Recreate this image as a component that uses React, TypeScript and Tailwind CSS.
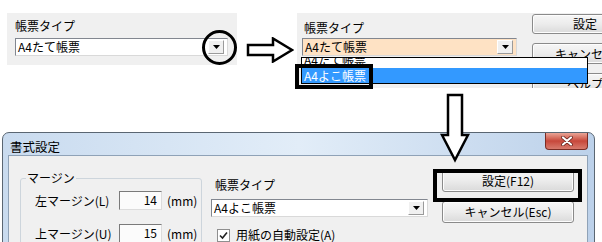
import React from 'react';

function Arrow() {
  return (
    <svg width="7" height="4" viewBox="0 0 7 4">
      <path d="M0 0H7L3.5 4Z" fill="#000" />
    </svg>
  );
}

function Combo({ value, bg = 'bg-white', width }: { value: string; bg?: string; width: string }) {
  return (
    <div className={`flex items-center h-[18px] border border-[#828790] border-r-[#d9d9d9] border-b-[#d9d9d9] ${bg} ${width}`}>
      <span className="flex-1 pl-[2px] text-[12px] leading-[14px] text-black whitespace-nowrap">{value}</span>
      <div className="mr-[3px] w-[16px] h-[14px] flex items-center justify-center bg-[#f0f0f0] border border-white border-r-[#9a9a9a] border-b-[#9a9a9a]">
        <Arrow />
      </div>
    </div>
  );
}

function Button({ label, className = '' }: { label: string; className?: string }) {
  return (
    <div
      className={`flex items-center justify-center rounded-[3px] border border-[#8a8a8a] bg-gradient-to-b from-[#f6f6f6] via-[#ececec] to-[#dadada] shadow-[inset_0_0_0_1px_#fdfdfd] text-[12px] leading-[14px] text-black whitespace-nowrap ${className}`}
    >
      {label}
    </div>
  );
}

function TextBox({ value }: { value: string }) {
  return (
    <div className="w-[43px] h-[19px] border border-[#7a7a7a] border-r-[#dcdcdc] border-b-[#dcdcdc] bg-[#fbfbfb] text-right pr-[4px] text-[12px] leading-[16px]">
      {value}
    </div>
  );
}

export default function App() {
  return (
    <div className="relative w-[602px] h-[242px] overflow-hidden bg-white text-black font-['Noto_Sans_CJK_JP','Liberation_Sans',sans-serif]">
      {/* top row: before / after */}
      <div className="flex items-start pt-[13px]">
        <div className="ml-[7px] w-[230px] h-[52px] bg-[#f0f0f0] pl-[8px] pt-[6px]">
          <div className="text-[12px] leading-[14px]">帳票タイプ</div>
          <div className="mt-[5px]">
            <Combo value="A4たて帳票" width="w-[213px]" />
          </div>
        </div>

        <svg className="ml-[9px] mt-[24px]" width="48" height="26" viewBox="0 0 48 26">
          <polygon points="2,8 27,8 27,1.5 46,13 27,24.5 27,18 2,18" fill="#fff" stroke="#000" strokeWidth="2.5" strokeLinejoin="miter" />
        </svg>

        <div className="relative ml-[3px] flex-1 h-[75px] bg-[#f0f0f0] overflow-hidden flex items-start pl-[5px]">
          <div className="w-[215px] pt-[8px]">
            <div className="ml-[2px] text-[12px] leading-[14px]">帳票タイプ</div>
            <div className="mt-[3px]">
              <Combo value="A4たて帳票" bg="bg-[#fee2c4]" width="w-[215px]" />
            </div>
          </div>
          <div className="ml-[15px] mt-[1px] flex flex-col gap-[9px] shrink-0">
            <Button label="設定" className="w-[106px] h-[20px]" />
            <Button label="キャンセル" className="w-[106px] h-[21px]" />
            <Button label="ヘルプ" className="w-[106px] h-[21px]" />
          </div>

          {/* open dropdown list */}
          <div className="absolute left-[4px] top-[44px] w-[287px] h-[27px] border border-black bg-white overflow-hidden text-[12px]">
            <div className="-mt-[6px]">
              <div className="h-[16px] leading-[15px] pl-[2px]">A4たて帳票</div>
              <div className="h-[16px] leading-[16px] pl-[2px] bg-[#3399ff] text-white">A4よこ帳票</div>
            </div>
          </div>
        </div>
      </div>

      {/* dialog */}
      <div className="ml-[2px] mt-[44px] w-[593px] h-[120px] rounded-t-[7px] border border-[#5a6672] bg-gradient-to-r from-[#c9dbef] via-[#e2edf8] to-[#bcd1ea] flex flex-col">
        <div className="h-[27px] flex items-start justify-between">
          <span className="ml-[7px] mt-[6px] text-[12.5px] leading-[16px]">書式設定</span>
          <div className="mr-[6px] w-[43px] h-[17px] rounded-b-[4px] border border-t-0 border-[#7a2c24] bg-gradient-to-b from-[#e9a496] via-[#c7473b] to-[#d77a6d] flex items-center justify-center">
            <svg width="12" height="10" viewBox="0 0 12 10">
              <path d="M2 1.5L10 8.5M10 1.5L2 8.5" stroke="#5a1a14" strokeWidth="3.6" strokeLinecap="round" />
              <path d="M2 1.5L10 8.5M10 1.5L2 8.5" stroke="#fff" strokeWidth="2.2" strokeLinecap="round" />
            </svg>
          </div>
        </div>

        <div className="ml-[5px] mr-[6px] flex-1 border border-[#8fa2b7] bg-[#f0f0f0] flex items-start">
          <fieldset className="ml-[11px] mt-[15px] w-[182px] h-[84px] border border-[#cdd5dc] rounded-[3px]">
            <legend className="ml-[5px] px-[1px] text-[12px] leading-[14px]">マージン</legend>
            <div className="mt-[6px] flex items-center pl-[14px]">
              <span className="w-[84px] text-[12px] leading-[14px]">左マージン(L)</span>
              <TextBox value="14" />
              <span className="ml-[5px] text-[12px] leading-[14px]">(mm)</span>
            </div>
            <div className="mt-[14px] flex items-center pl-[14px]">
              <span className="w-[84px] text-[12px] leading-[14px]">上マージン(U)</span>
              <TextBox value="15" />
              <span className="ml-[5px] text-[12px] leading-[14px]">(mm)</span>
            </div>
          </fieldset>

          <div className="ml-[9px] mt-[22px]">
            <div className="ml-[4px] text-[12px] leading-[14px]">帳票タイプ</div>
            <div className="mt-[7px]">
              <Combo value="A4よこ帳票" width="w-[217px]" />
            </div>
            <div className="mt-[11px] ml-[6px] flex items-center">
              <div className="w-[13px] h-[13px] border border-[#8f8f8f] bg-white flex items-center justify-center">
                <svg width="9" height="9" viewBox="0 0 9 9">
                  <path d="M1 4.5L3.5 7L8 1.5" fill="none" stroke="#222" strokeWidth="1.6" />
                </svg>
              </div>
              <span className="ml-[6px] text-[12px] leading-[14px]">用紙の自動設定(A)</span>
            </div>
          </div>

          <div className="ml-[14px] mt-[13px] flex flex-col gap-[9px]">
            <Button label="設定(F12)" className="w-[132px] h-[23px]" />
            <Button label="キャンセル(Esc)" className="w-[132px] h-[22px]" />
          </div>
        </div>
      </div>

      {/* annotations */}
      <div className="absolute left-[202px] top-[30px] w-[35px] h-[35px] rounded-full border-[3.5px] border-black" />
      <div className="absolute left-[295px] top-[64px] w-[78px] h-[25px] border-[4px] border-black" />
      <svg className="absolute left-[440px] top-[93px]" width="30" height="70" viewBox="0 0 30 70">
        <polygon points="8,2 22,2 22,42 28,42 15,67 2,42 8,42" fill="#fff" stroke="#000" strokeWidth="2.5" />
      </svg>
      <div className="absolute left-[433px] top-[169px] w-[149px] h-[33px] border-[4px] border-black" />
    </div>
  );
}
